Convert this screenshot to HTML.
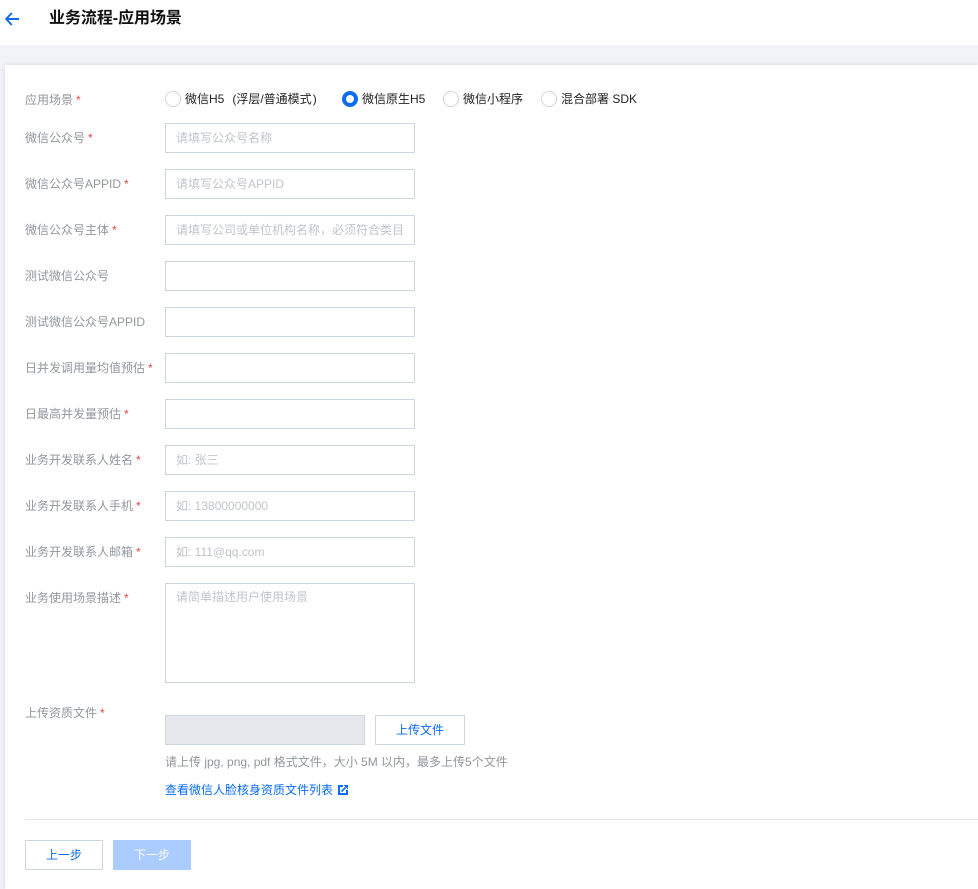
<!DOCTYPE html>
<html lang="zh"><head><meta charset="utf-8"><style>
html,body{margin:0;padding:0;width:978px;height:889px;overflow:hidden;background:#fff}
body{position:relative;font-family:"Liberation Sans","Noto Sans CJK SC",sans-serif;font-size:12px;color:#000}
.a{position:absolute;white-space:nowrap}
.l{position:absolute;left:25px;color:#92969e;line-height:18px;white-space:nowrap}
.l i{color:#e54545;font-style:normal;margin-left:3px}
.in{position:absolute;left:165px;width:248px;height:28px;border:1px solid #cfd5de;background:#fff;color:#c0c4cc;line-height:28px;padding:0;text-indent:10px;overflow:hidden;white-space:nowrap}
.r{position:absolute;top:91px;width:14px;height:14px;border:1px solid #cfd5de;border-radius:50%;background:#fff}
.t{position:absolute;top:90px;line-height:18px;white-space:nowrap;color:#222}
</style></head><body>
<div class="a" style="left:0;top:45px;width:978px;height:844px;background:#f2f3f8"></div>
<div class="a" style="left:5px;top:65px;width:973px;height:824px;background:#fff;box-shadow:0 0 5px rgba(54,58,80,.14)"></div>
<svg class="a" style="left:5px;top:12px" width="14" height="14" viewBox="0 0 14 14"><path d="M6.8 1L1.2 7L6.8 13M1.5 7H14" fill="none" stroke="#0a6cf5" stroke-width="1.9"/></svg>
<div class="a" style="left:49px;top:9px;font-size:16px;font-weight:700;line-height:20px;color:#111;letter-spacing:-.05px">业务流程-应用场景</div>

<div class="l" style="top:91px">应用场景<i>*</i></div>
<div class="r" style="left:165px"></div><div class="t" style="left:185px">微信H5<span style="margin-left:8px">(</span>浮层/普通模式<span style="margin-left:1px">)</span></div>
<div class="r" style="left:342px;width:8px;height:8px;border:4px solid #0a6cf5"></div><div class="t" style="left:362px">微信原生H5</div>
<div class="r" style="left:443px"></div><div class="t" style="left:463px">微信小程序</div>
<div class="r" style="left:541px"></div><div class="t" style="left:561px">混合部署 SDK</div>

<div class="l" style="top:129px">微信公众号<i>*</i></div><div class="in" style="top:123px">请填写公众号名称</div>
<div class="l" style="top:175px">微信公众号APPID<i>*</i></div><div class="in" style="top:169px">请填写公众号APPID</div>
<div class="l" style="top:221px">微信公众号主体<i>*</i></div><div class="in" style="top:215px">请填写公司或单位机构名称，必须符合类目</div>
<div class="l" style="top:267px">测试微信公众号</div><div class="in" style="top:261px"></div>
<div class="l" style="top:313px">测试微信公众号APPID</div><div class="in" style="top:307px"></div>
<div class="l" style="top:359px">日并发调用量均值预估<i>*</i></div><div class="in" style="top:353px"></div>
<div class="l" style="top:405px">日最高并发量预估<i>*</i></div><div class="in" style="top:399px"></div>
<div class="l" style="top:451px">业务开发联系人姓名<i>*</i></div><div class="in" style="top:445px">如: 张三</div>
<div class="l" style="top:497px">业务开发联系人手机<i>*</i></div><div class="in" style="top:491px">如: 13800000000</div>
<div class="l" style="top:543px">业务开发联系人邮箱<i>*</i></div><div class="in" style="top:537px">如: 111@qq.com</div>
<div class="l" style="top:589px">业务使用场景描述<i>*</i></div><div class="in" style="top:583px;height:98px;line-height:26px">请简单描述用户使用场景</div>
<div class="l" style="top:704px">上传资质文件<i>*</i></div>

<div class="a" style="left:165px;top:715px;width:198px;height:28px;background:#e5e8ed;border:1px solid #cfd5de"></div>
<div class="a" style="left:375px;top:715px;width:88px;height:28px;border:1px solid #cfd5de;color:#0a6cf5;text-align:center;line-height:28px">上传文件</div>
<div class="a" style="left:165px;top:753px;line-height:18px;color:#92969e">请上传 jpg, png, pdf 格式文件，大小 5M 以内，最多上传5个文件</div>
<div class="a" style="left:165px;top:781px;line-height:18px;color:#0a6cf5">查看微信人脸核身资质文件列表</div>
<svg class="a" style="left:338px;top:785px" width="10" height="10" viewBox="0 0 10 10"><path d="M5 1H1V9H9V5" fill="none" stroke="#0a6cf5" stroke-width="2"/><path d="M3.5 6.5L7.5 2.5" fill="none" stroke="#0a6cf5" stroke-width="1.6"/><path d="M5.5 0H10V4.5Z" fill="#0a6cf5"/></svg>
<div class="a" style="left:25px;top:819px;width:953px;height:1px;background:#e7e7e7"></div>
<div class="a" style="left:25px;top:840px;width:76px;height:28px;border:1px solid #cfd5de;color:#0a6cf5;text-align:center;line-height:28px">上一步</div>
<div class="a" style="left:113px;top:840px;width:78px;height:30px;background:#aaccff;color:#fff;text-align:center;line-height:30px">下一步</div>
</body></html>
